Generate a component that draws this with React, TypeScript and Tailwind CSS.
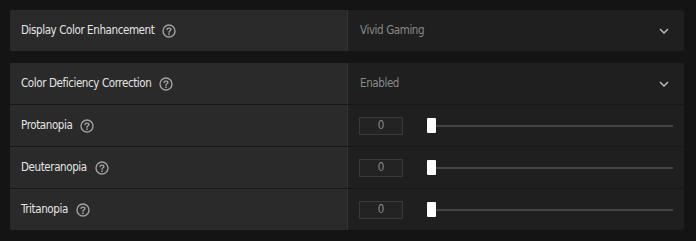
import React from "react";

const font = { fontFamily: '"DejaVu Sans Condensed", "Roboto", sans-serif' };

function Help() {
  return (
    <svg width="14" height="14" viewBox="0 0 14 14" className="shrink-0">
      <circle cx="7" cy="7" r="6" fill="none" stroke="#a0a0a0" strokeWidth="1.4" />
      <path d="M5.1 5.5 C5.1 3.6 8.9 3.6 8.9 5.5 C8.9 6.8 7 6.8 7 8.2" fill="none" stroke="#a0a0a0" strokeWidth="1.4" strokeLinecap="round" />
      <circle cx="7" cy="10.2" r="0.85" fill="#a0a0a0" />
    </svg>
  );
}

function Chevron() {
  return (
    <svg width="10" height="6" viewBox="0 0 10 6" className="shrink-0">
      <path d="M1 1 L5 5 L9 1" fill="none" stroke="#b8b8b8" strokeWidth="1.5" />
    </svg>
  );
}

function Label({ text }: { text: string }) {
  return (
    <div className="w-[338px] shrink-0 bg-[#2a2a2a] border-r border-[#333] flex items-center pl-[11px] gap-[8px]">
      <span className="text-[11.5px] tracking-[-0.4px] text-[#e4e4e4] font-normal">{text}</span>
      <Help />
    </div>
  );
}

function DropdownRow({ label, value }: { label: string; value: string }) {
  return (
    <div className="flex h-[41px]">
      <Label text={label} />
      <div className="flex-1 bg-[#1f1f1f] flex items-center justify-between pl-[12px] pr-[15px]">
        <span className="text-[11.5px] tracking-[-0.4px] text-[#8a8a8a]">{value}</span>
        <Chevron />
      </div>
    </div>
  );
}

function SliderRow({ label }: { label: string }) {
  return (
    <div className="flex h-[42px] border-t border-[#181818]">
      <Label text={label} />
      <div className="flex-1 bg-[#1f1f1f] flex items-center pl-[11px] pr-[11px]">
        <div className="w-[44px] h-[18px] border border-[#3a3a3a] bg-[#232323] flex items-center justify-center text-[11.5px] text-[#8a8a8a]">
          0
        </div>
        <div className="flex-1 ml-[24px] relative h-[15px] flex items-center">
          <div className="w-full h-[2px] bg-[#444]" />
          <div className="absolute left-0 top-0 w-[9px] h-[15px] bg-white rounded-[1px]" />
        </div>
      </div>
    </div>
  );
}

export default function App() {
  return (
    <div className="w-[696px] h-[241px] bg-[#141414] pl-[10px] pt-[10px]" style={font}>
      <div className="w-[674px] rounded-[2px] overflow-hidden">
        <DropdownRow label="Display Color Enhancement" value="Vivid Gaming" />
      </div>
      <div className="w-[674px] mt-[12px] rounded-[2px] overflow-hidden">
        <DropdownRow label="Color Deficiency Correction" value="Enabled" />
        <SliderRow label="Protanopia" />
        <SliderRow label="Deuteranopia" />
        <SliderRow label="Tritanopia" />
      </div>
    </div>
  );
}
